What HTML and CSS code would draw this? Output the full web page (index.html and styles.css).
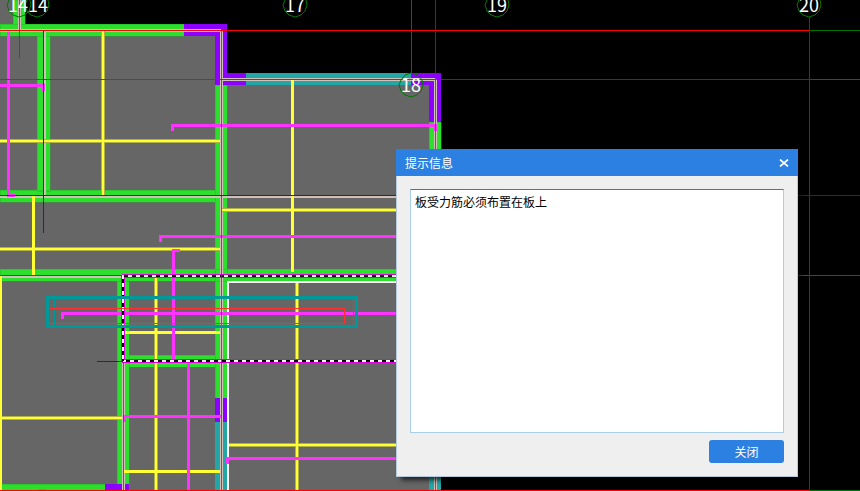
FILE: index.html
```
<!DOCTYPE html>
<html lang="zh-CN">
<head>
<meta charset="utf-8">
<title>提示信息</title>
<link rel="stylesheet" href="styles.css">
</head>
<body>
<main class="workspace">
<svg class="plan" aria-hidden="true" shape-rendering="crispEdges">
  <path class="slab" d="M0 0H25V24H227V73H441V491H0z"/>

  <!-- beams -->
  <g class="beam">
    <path d="M13 0h12v24h-12zM0 24h184v12h-184zM37 36h13v155h-13zM0 190h215v12h-215zM215 85h12v313h-12zM0 269h436v12h-436zM117 281h12v203h-12zM129 355h86v12h-86zM0 484h105v7h-105zM429 122h12v350h-12z"/>
  </g>
  <path class="violet" d="M184 24h43v49h19v12h-31v-49h-31zM411 73h30v49h-12v-37h-18zM215 398h12v24h-12zM105 484h24v7h-24z"/>
  <path class="cyan" d="M246 73h165v12h-165zM215 422h12v69h-12zM429 470h12v21h-12z"/>

  <!-- pale beam centre lines -->
  <path class="center" d="M0 30.5H221M19.5 0V31M44 31V195M0 196H396M221.5 30V491M221 79.5H436M435.5 79V491M0 276H122M123.5 361V491"/>

  <!-- bottom reinforcement -->
  <path class="bar-edge" d="M103 31V195M0 141H220M0 249H220M222 210H396M0 418H122M156 278V491M297 282V491M228 445H396"/>
  <path class="bar-core" d="M103 31V195M0 141H220M0 249H220M222 210H396M0 418H122M156 278V491M297 282V491M228 445H396"/>
  <path class="bar" d="M33.5 196V275M292.5 80V272M.5 276V490M125 332.5H220M124 471.5H220"/>

  <!-- slab outline -->
  <path class="white" d="M228 491V282H396"/>

  <!-- top reinforcement -->
  <path class="magenta" d="M8.5 32V195H15M0 85.5H43V91M172.5 131V125.5H435.5V131M160.5 242V236.5H396M180 250.5H173.5V360M62 319V313.5H396M188.5 362V491M124.5 422V416H221M227.5 464V458.5H396M38 490H46"/>

  <!-- selected bay -->
  <path class="pick" d="M122 276H396M123 275V361M122 361H396"/>
  <path class="pick-light" d="M122 276H396M123 275V361M122 361H396"/>
  <path class="pick-dark" d="M124 276H396M123 279V361M126 361H396"/>

  <!-- axes -->
  <path class="red" d="M0 30.5H809M0 79.5H436M0 275.5H122M798 275.5H809M0 490.5H809"/>
  <path class="red soft" d="M436 79.5H809M19.5 0V58M221.5 31V491M435.5 0V491M809.5 17V491M123.5 362V491"/>
  <path class="darkred" d="M43.5 31V233M0 195.5H2000M97 361.5H123"/>
  <path class="green" d="M411.5 0V73M810 30.5H2000M810 79.5H2000M810 275.5H2000M810 490.5H2000"/>

  <!-- placement cursor -->
  <path class="marker-thin" d="M54.5 299V325M353.5 299V325"/>
  <path class="marker-red" d="M49 308.5H344.5V323.5H49"/>
  <rect class="marker" x="47.5" y="297.5" width="309" height="29"/>

  <!-- axis bubbles -->
  <g class="bubbles" shape-rendering="auto">
    <path id="bubble" d="M19 -7L26 -5L30 0L31 5L29 11L25 15L19 17L13 15L9 11L7 5L9 0L13 -5z"/>
    <use href="#bubble" x="18"/><use href="#bubble" x="276"/><use href="#bubble" x="392" y="80"/><use href="#bubble" x="478"/><use href="#bubble" x="790"/>
  </g>
  <g class="labels">
    <text x="18" y="12">14</text><text x="38" y="12">14</text><text x="295" y="12">17</text><text x="411" y="92">18</text><text x="497" y="12">19</text><text x="809" y="12">20</text>
  </g>
</svg>

<section class="dialog" role="dialog" aria-labelledby="dialog-title">
  <header class="titlebar">
    <h1 class="title" id="dialog-title">提示信息</h1>
    <button class="close" type="button" aria-label="关闭窗口">
      <svg width="10" height="8" viewBox="0 0 10 8" aria-hidden="true"><path d="M1 .5L9 7.5M9 .5L1 7.5"/></svg>
    </button>
  </header>
  <div class="content">
    <textarea class="message" aria-labelledby="dialog-title" readonly>板受力筋必须布置在板上</textarea>
    <footer class="actions"><button class="confirm" type="button">关闭</button></footer>
  </div>
</section>
</main>
</body>
</html>
```
FILE: styles.css
```
* { box-sizing: border-box; }

body {
  margin: 0;
  background: #000;
  font: 12px/16px "Noto Sans CJK SC", sans-serif;
}

.workspace {
  position: relative;
  height: 100vh;
  overflow: hidden;
}

.plan {
  display: block;
  width: 100%;
  height: 100%;
}

.plan path, .plan rect { fill: none; }
.plan .slab { fill: #666; }
.plan .beam path { fill: #2cdf2c; stroke: #28aa28; stroke-width: 1; stroke-opacity: .4; }
.plan .violet { fill: #8c00ff; }
.plan .cyan { fill: #22a6a6; }
.center { stroke: #d0c0b8; stroke-width: 3; }
.bar-edge { stroke: #b0b048; stroke-width: 4; }
.bar-core { stroke: #ffff32; stroke-width: 2; }
.bar { stroke: #ffff32; stroke-width: 3; }
.white { stroke: #fff; stroke-width: 2; }
.magenta { stroke: #ff32ff; stroke-width: 3; }
.pick { stroke: #e000e0; stroke-width: 4; }
.pick-light { stroke: #fff; stroke-width: 2; }
.pick-dark { stroke: #000; stroke-width: 2; stroke-dasharray: 4 4; }
.red { stroke: #f00; }
.soft { stroke: #e80000; stroke-opacity: .8; }
.darkred { stroke: #800a0a; }
.green { stroke: #007400; }
.marker { stroke: #009999; stroke-width: 3; }
.marker-thin { stroke: #009999; }
.marker-red { stroke: #ff3030; }
.bubbles { stroke: #007800; stroke-width: 1; }

.labels {
  fill: #fff;
  font: 18px "Noto Sans CJK SC", sans-serif;
  text-anchor: middle;
}

.dialog {
  position: absolute;
  top: 149px;
  left: 396px;
  width: 402px;
  background: #efefef;
  box-shadow: 4px 4px 5px -1px rgba(0, 0, 0, .7);
}

.titlebar {
  display: flex;
  align-items: center;
  justify-content: space-between;
  height: 27px;
  padding: 0 9px;
  background: #2c80e2;
  color: #fff;
}

.title {
  margin: 0;
  font-size: 12px;
  font-weight: 400;
}

.close {
  display: flex;
  padding: 0;
  border: 0;
  background: none;
}

.close path { fill: none; stroke: #fff; stroke-width: 1.7; }

.content {
  padding: 13px;
  border: 1px solid #b9c9dc;
  border-top: 0;
}

.message {
  display: block;
  width: 100%;
  height: 244px;
  padding: 4px;
  border: 1px solid #a9cfe8;
  border-top-color: #3d7bad;
  outline: 0;
  background: #fff;
  color: #000;
  font: inherit;
  resize: none;
}

.actions {
  display: flex;
  justify-content: flex-end;
  padding-top: 7px;
}

.confirm {
  width: 75px;
  height: 23px;
  padding: 0;
  border: 0;
  border-radius: 3px;
  background: #2c80e2;
  color: #fff;
  font: inherit;
}
```
